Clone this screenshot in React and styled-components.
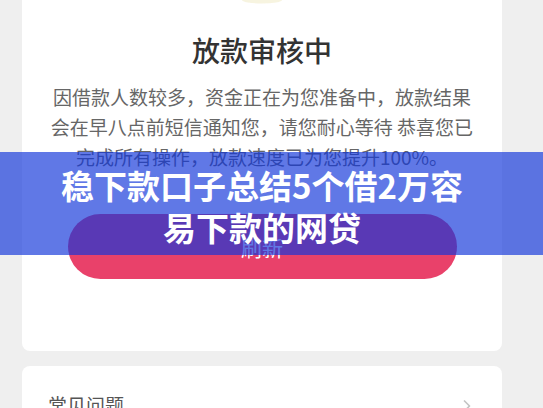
import styled, { createGlobalStyle } from "styled-components";
import { ChevronRight } from "lucide-react";

const Global = createGlobalStyle`
  html, body {
    margin: 0;
    padding: 0;
    background: #efefef;
    overflow: hidden;
  }
  body {
    font-family: "Noto Sans CJK SC", "Noto Sans", "Liberation Sans", sans-serif;
  }
`;

export default function App() {
  return (
    <Page>
      <Global />
      <Column>
        <StatusCard>
          <Icon>
            <svg width="48" height="12" viewBox="0 0 48 12">
              <ellipse cx="24" cy="0" rx="20" ry="3.5" fill="#f1eccb" opacity="0.6" />
            </svg>
          </Icon>
          <Title>放款审核中</Title>
          <Desc>
            因借款人数较多，资金正在为您准备中，放款结果会在早八点前短信通知您，请您耐心等待 恭喜您已完成所有操作，放款速度已为您提升100%。
          </Desc>
          <RefreshButton>刷新</RefreshButton>
        </StatusCard>
        <FaqCard>
          <span>常见问题</span>
          <ChevronRight size={20} color="#c4c4c4" strokeWidth={2} />
        </FaqCard>
      </Column>
      <Banner>
        <BannerText>稳下款口子总结5个借2万容易下款的网贷</BannerText>
      </Banner>
    </Page>
  );
}

const Page = styled.div`
  position: relative;
  width: 543px;
  height: 408px;
  overflow: hidden;
`;

const Column = styled.div`
  display: flex;
  flex-direction: column;
  gap: 15px;
  width: 480px;
  margin-left: 22px;
`;

const StatusCard = styled.div`
  margin-top: -40px;
  background: #fff;
  border-radius: 8px;
  padding-bottom: 72px;
  display: flex;
  flex-direction: column;
  align-items: center;
`;

const Icon = styled.div`
  height: 43px;
  display: flex;
  align-items: flex-end;
  justify-content: center;
  svg { display: block; margin-bottom: -9px; }
`;

const Title = styled.h1`
  margin: 29px 0 0;
  font-size: 28px;
  line-height: 36px;
  font-weight: 500;
  color: #333;
`;

const Desc = styled.p`
  margin: 14px 0 0;
  width: 430px;
  font-size: 19px;
  line-height: 30px;
  color: #666;
  text-align: center;
`;

const RefreshButton = styled.button`
  margin-top: 42px;
  width: 389px;
  height: 65px;
  border: none;
  border-radius: 33px;
  background: #e9416a;
  color: #fff;
  font-family: inherit;
  font-size: 21px;
`;

const FaqCard = styled.div`
  background: #fff;
  border-radius: 8px;
  height: 80px;
  padding: 24px 25px 0 26px;
  box-sizing: border-box;
  display: flex;
  justify-content: space-between;
  align-items: flex-start;
  font-size: 19px;
  line-height: 30px;
  color: #555;
  svg { margin-top: 6px; }
`;

const Banner = styled.div`
  position: absolute;
  top: 152px;
  left: 0;
  right: 0;
  height: 103px;
  background: rgba(18, 54, 218, 0.67);
  padding-left: 22px;
  box-sizing: border-box;
`;

const BannerText = styled.div`
  width: 420px;
  margin: 0 30px;
  padding-top: 12px;
  font-size: 33px;
  line-height: 42px;
  font-weight: 700;
  color: #fff;
  text-align: center;
`;
